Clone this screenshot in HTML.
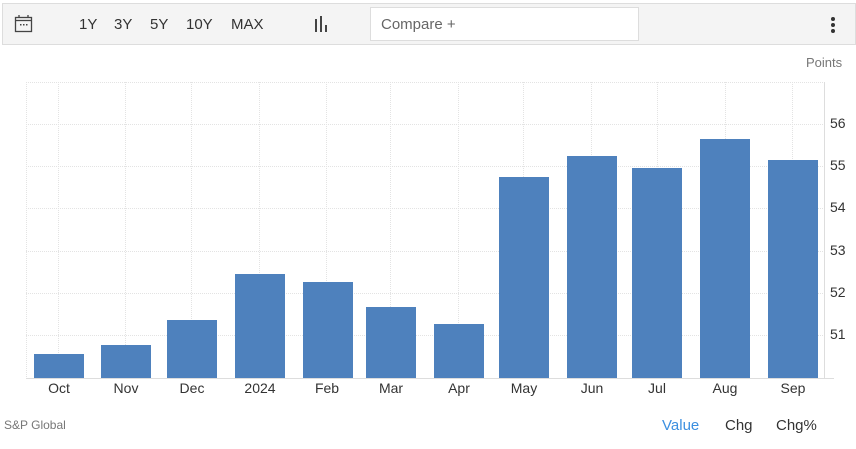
<!DOCTYPE html><html><head><style>
body{margin:0;width:856px;height:449px;background:#fff;font-family:"Liberation Sans",sans-serif;position:relative;overflow:hidden}
.a{position:absolute}
.tb{left:2px;top:3px;width:852px;height:40px;background:#f4f4f4;border:1px solid #ddd}
.t{font-size:15px;color:#333;top:16px}
.bar{position:absolute;background:#4e81bd;width:50px}
.yl{position:absolute;left:830px;font-size:14px;color:#333}
.xl{position:absolute;top:380px;font-size:14px;color:#333;width:60px;text-align:center}
</style></head><body>
<div class="a tb"></div>
<svg class="a" style="left:14px;top:14px" width="20" height="20" viewBox="0 0 20 20"><rect x="1.5" y="3.5" width="16" height="14" fill="none" stroke="#444" stroke-width="1.3"/><line x1="1.5" y1="6.5" x2="17.5" y2="6.5" stroke="#444" stroke-width="1.3"/><line x1="5" y1="1" x2="5" y2="4" stroke="#444" stroke-width="1.3"/><line x1="14" y1="1" x2="14" y2="4" stroke="#444" stroke-width="1.3"/><rect x="6" y="10" width="1.5" height="1.5" fill="#444"/><rect x="9" y="10" width="1.5" height="1.5" fill="#444"/><rect x="12" y="10" width="1.5" height="1.5" fill="#444"/></svg>
<div class="a t" style="left:79px">1Y</div>
<div class="a t" style="left:114px">3Y</div>
<div class="a t" style="left:150px">5Y</div>
<div class="a t" style="left:186px">10Y</div>
<div class="a t" style="left:231px">MAX</div>
<svg class="a" style="left:313px;top:16px" width="16" height="16"><rect x="2" y="3" width="2" height="13" fill="#444"/><rect x="7" y="0" width="2" height="16" fill="#444"/><rect x="12" y="9" width="2" height="7" fill="#444"/></svg>
<div class="a" style="left:370px;top:7px;width:267px;height:32px;background:#fff;border:1px solid #ddd"></div>
<div class="a" style="left:381px;top:16px;font-size:15px;color:#666">Compare +</div>
<div class="a" style="left:831px;top:17px;width:4px;height:4px;border-radius:2px;background:#333"></div>
<div class="a" style="left:831px;top:23px;width:4px;height:4px;border-radius:2px;background:#333"></div>
<div class="a" style="left:831px;top:29px;width:4px;height:4px;border-radius:2px;background:#333"></div>
<div class="a" style="left:806px;top:55px;font-size:13px;color:#777">Points</div>
<svg class="a" style="left:0;top:0" width="856" height="449">
<g stroke="#e3e3e3" stroke-dasharray="1,1">
<line x1="26" y1="82.5" x2="824" y2="82.5"/><line x1="26" y1="124.5" x2="824" y2="124.5"/><line x1="26" y1="166.5" x2="824" y2="166.5"/><line x1="26" y1="208.5" x2="824" y2="208.5"/><line x1="26" y1="251.5" x2="824" y2="251.5"/><line x1="26" y1="293.5" x2="824" y2="293.5"/><line x1="26" y1="335.5" x2="824" y2="335.5"/>
<line x1="26.5" y1="82" x2="26.5" y2="378"/><line x1="58.5" y1="82" x2="58.5" y2="378"/><line x1="125.5" y1="82" x2="125.5" y2="378"/><line x1="191.5" y1="82" x2="191.5" y2="378"/><line x1="259.5" y1="82" x2="259.5" y2="378"/><line x1="326.5" y1="82" x2="326.5" y2="378"/><line x1="390.5" y1="82" x2="390.5" y2="378"/><line x1="458.5" y1="82" x2="458.5" y2="378"/><line x1="523.5" y1="82" x2="523.5" y2="378"/><line x1="591.5" y1="82" x2="591.5" y2="378"/><line x1="657.5" y1="82" x2="657.5" y2="378"/><line x1="725.5" y1="82" x2="725.5" y2="378"/><line x1="792.5" y1="82" x2="792.5" y2="378"/>
</g>
<line x1="824.5" y1="82" x2="824.5" y2="378" stroke="#ddd"/>
<line x1="26" y1="378.5" x2="834" y2="378.5" stroke="#ddd"/>
</svg>
<div class="bar" style="left:34px;top:354px;height:24px"></div>
<div class="bar" style="left:101px;top:345px;height:33px"></div>
<div class="bar" style="left:167px;top:320px;height:58px"></div>
<div class="bar" style="left:235px;top:274px;height:104px"></div>
<div class="bar" style="left:303px;top:282px;height:96px"></div>
<div class="bar" style="left:366px;top:307px;height:71px"></div>
<div class="bar" style="left:434px;top:324px;height:54px"></div>
<div class="bar" style="left:499px;top:177px;height:201px"></div>
<div class="bar" style="left:567px;top:156px;height:222px"></div>
<div class="bar" style="left:632px;top:168px;height:210px"></div>
<div class="bar" style="left:700px;top:139px;height:239px"></div>
<div class="bar" style="left:768px;top:160px;height:218px"></div>
<div class="yl" style="top:115px">56</div><div class="yl" style="top:157px">55</div><div class="yl" style="top:199px">54</div><div class="yl" style="top:242px">53</div><div class="yl" style="top:284px">52</div><div class="yl" style="top:326px">51</div>
<div class="xl" style="left:29px">Oct</div><div class="xl" style="left:96px">Nov</div><div class="xl" style="left:162px">Dec</div><div class="xl" style="left:230px">2024</div><div class="xl" style="left:297px">Feb</div><div class="xl" style="left:361px">Mar</div><div class="xl" style="left:429px">Apr</div><div class="xl" style="left:494px">May</div><div class="xl" style="left:562px">Jun</div><div class="xl" style="left:627px">Jul</div><div class="xl" style="left:695px">Aug</div><div class="xl" style="left:763px">Sep</div>
<div class="a" style="left:4px;top:418px;font-size:12px;color:#777">S&amp;P Global</div>
<div class="a" style="left:662px;top:417px;font-size:15px;color:#3b8fe0">Value</div>
<div class="a" style="left:725px;top:417px;font-size:15px;color:#333">Chg</div>
<div class="a" style="left:776px;top:417px;font-size:15px;color:#333">Chg%</div>
</body></html>
